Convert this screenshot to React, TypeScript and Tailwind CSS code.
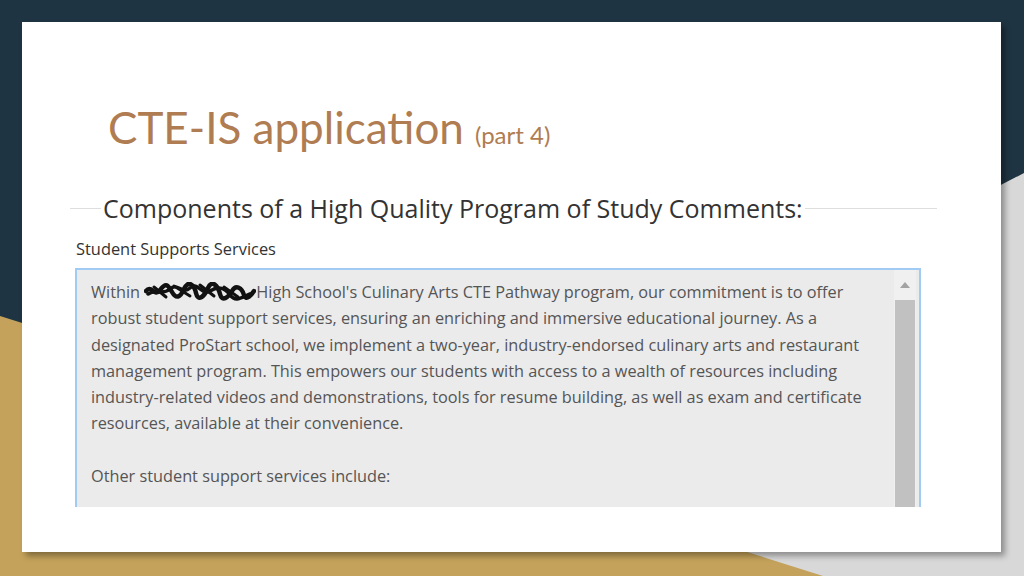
import React from 'react';

const lines = [
    'robust student support services, ensuring an enriching and immersive educational journey. As a',
    'designated ProStart school, we implement a two-year, industry-endorsed culinary arts and restaurant',
    'management program. This empowers our students with access to a wealth of resources including',
    'industry-related videos and demonstrations, tools for resume building, as well as exam and certificate',
    'resources, available at their convenience.',
];

// black marker scribble that hides the school name
function Scribble() {
    return (
        <svg width="112" height="20" viewBox="0 0 112 20" className="inline-block align-middle -mt-[3px]">
            <path
                d="M2 9 C8 2 10 16 16 8 S24 3 28 10 S36 16 40 7 S50 2 52 11 S60 15 64 6 S74 4 76 12 S84 16 88 9 S98 6 100 13 S108 12 110 9"
                fill="none"
                stroke="#111"
                strokeWidth="4.5"
                strokeLinecap="round"
            />
            <path
                d="M4 12 C12 6 18 14 26 7 S38 13 46 6 S58 14 66 9 S80 5 86 13 S98 15 106 12"
                fill="none"
                stroke="#111"
                strokeWidth="3.5"
                strokeLinecap="round"
            />
            <path d="M30 4 L46 14 M56 3 L70 14 M80 5 L94 15 M10 5 L22 15" stroke="#111" strokeWidth="3" strokeLinecap="round" />
        </svg>
    );
}

export default function App() {
    return (
        <div className="relative w-[1024px] h-[576px] overflow-hidden bg-[#1f3442]">
            {/* background shapes */}
            <svg className="absolute inset-0" width="1024" height="576" viewBox="0 0 1024 576">
                <polygon points="1024,173 1024,576 249,576" fill="#d8d8d8" />
                <polygon points="0,316 823,576 0,576" fill="#c4a25b" />
            </svg>

            <div className="relative pt-[22px] pl-[22px]">
                <div className="w-[979px] h-[530px] bg-white shadow-[4px_4px_6px_rgba(0,0,0,0.35)]">
                    {/* slide title */}
                    <div
                        className="pl-[86px] pt-[83px] text-[#b07c52] leading-none whitespace-nowrap"
                        style={{ fontFamily: 'Lato, sans-serif' }}
                    >
                        <span className="text-[44px]">CTE-IS application</span>
                        <span className="text-[24px] ml-[11px]">(part 4)</span>
                    </div>

                    {/* embedded form screenshot */}
                    <div
                        className="ml-[48px] mt-[44px] w-[867px] text-[#333]"
                        style={{ fontFamily: '"Open Sans", "Noto Sans", sans-serif' }}
                    >
                        <fieldset className="border-t border-[#dedede] border-x-0 border-b-0">
                            <legend className="ml-[31px] px-[2px] text-[25px] leading-[30px]">
                                Components of a High Quality Program of Study Comments:
                            </legend>
                        </fieldset>
                        <div className="ml-[6px] mt-[15px] text-[16.4px] leading-[22px]">
                            Student Supports Services
                        </div>
                        {/* textarea, cropped at the bottom like the screenshot */}
                        <div className="ml-[5px] mt-[8px] w-[846px] h-[239px] overflow-hidden flex border-2 border-b-0 border-[#9fcbf5] bg-[#ebebec]">
                            <div className="flex-1 pl-[14px] pt-[9px] text-[16.3px] leading-[26.3px] text-[#555] whitespace-nowrap">
                                <div>
                                    Within <Scribble />High School's Culinary Arts CTE Pathway program, our commitment is to offer
                                </div>
                                {lines.map((line) => (
                                    <div key={line}>{line}</div>
                                ))}
                                <div>&nbsp;</div>
                                <div>Other student support services include:</div>
                            </div>
                            <div className="w-[22px] flex flex-col bg-[#f0f0f0] mr-[3px]">
                                <div className="h-[30px] flex items-center justify-center">
                                    <svg width="10" height="6" viewBox="0 0 10 6">
                                        <polygon points="0,6 5,0 10,6" fill="#a3a3a3" />
                                    </svg>
                                </div>
                                <div className="flex-1 mx-[1px] bg-[#c1c1c1]" />
                            </div>
                        </div>
                    </div>
                </div>
            </div>
        </div>
    );
}
